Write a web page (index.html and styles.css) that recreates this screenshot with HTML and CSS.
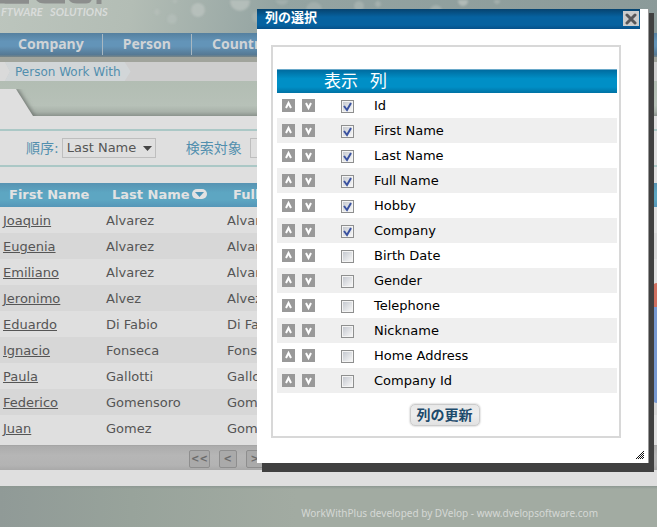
FILE: index.html
```html
<!DOCTYPE html>
<html lang="ja">
<head>
<meta charset="utf-8">
<title>Person Work With</title>
<link rel="stylesheet" href="styles.css">
</head>
<body>
<div class="page">
<header class="banner">
  <svg class="bubbles" width="657" height="33" viewBox="0 0 657 33" aria-hidden="true">
    <g fill="#bcc4c0" opacity=".75"><circle cx="198" cy="10" r="7"/><circle cx="240" cy="1" r="10"/><circle cx="172" cy="19" r="5" opacity=".6"/><circle cx="157" cy="12" r="3" opacity=".6"/><circle cx="175" cy="0" r="3" opacity=".6"/><circle cx="258" cy="17" r="6" opacity=".5"/><circle cx="282" cy="-2" r="7" opacity=".5"/><circle cx="314" cy="10" r="8" opacity=".5"/><circle cx="359" cy="6" r="5" opacity=".6"/><circle cx="378" cy="4" r="3" opacity=".6"/><circle cx="436" cy="11" r="6" opacity=".6"/><circle cx="463" cy="1" r="5"/><circle cx="497" cy="1" r="3" opacity=".6"/></g>
  </svg>
  <svg class="logo" width="110" height="14" viewBox="0 0 110 14" aria-label="DVelop">
    <g fill="none" stroke="#8c8e8d" stroke-width="5"><path d="M-2 1H29"/><path d="M0 -6Q1 1 8 1H29"/><path d="M37 -6Q37 1 45 1H65"/><path d="M70 -6Q70 1 77 1H86Q90 1 90 -5"/><path d="M99 -4V4"/></g>
  </svg>
  <span class="tagline">FTWARE &nbsp; SOLUTIONS</span>
</header>
<nav class="nav"><a href="#">Company</a><a href="#">Person</a><a href="#">Country</a></nav>
<div class="crumbs"><span class="home"></span><a href="#">Person Work With</a></div>
<div class="tabs"><svg width="44" height="27" viewBox="0 0 44 27" aria-hidden="true"><defs><filter id="soft" x="-20%" y="-30%" width="150%" height="160%"><feGaussianBlur stdDeviation="2"/></filter></defs><path d="M-9 0H18L36 29H-9Z" fill="#6f7671" filter="url(#soft)"/><path d="M-2 0H16L33 27H-2Z" fill="#dfdfdf"/></svg></div>
<main class="panel">
  <form class="filters">
    <label for="order">順序:</label>
    <span class="pick"><select id="order"><option>Last Name</option></select><svg width="9" height="5" viewBox="0 0 9 5" aria-hidden="true"><path d="M0 0H9L4.500 5Z" fill="#444"/></svg></span>
    <label for="target">検索対象</label>
    <input id="target" type="text">
  </form>
  <table class="people">
    <thead><tr><th>First Name</th><th>Last Name<svg width="15" height="10" viewBox="0 0 15 10" aria-hidden="true"><rect width="15" height="10" rx="5" fill="#e2e2e2"/><path d="M3 3H12L7.500 8Z" fill="#4f96b8"/></svg></th><th>Full Name</th></tr></thead>
    <tbody>
      <tr><td><a href="#">Joaquin</a></td><td>Alvarez</td><td>Alvarez Joaquin</td></tr>
      <tr><td><a href="#">Eugenia</a></td><td>Alvarez</td><td>Alvarez Eugenia</td></tr>
      <tr><td><a href="#">Emiliano</a></td><td>Alvarez</td><td>Alvarez Emiliano</td></tr>
      <tr><td><a href="#">Jeronimo</a></td><td>Alvez</td><td>Alvez Jeronimo</td></tr>
      <tr><td><a href="#">Eduardo</a></td><td>Di Fabio</td><td>Di Fabio Eduardo</td></tr>
      <tr><td><a href="#">Ignacio</a></td><td>Fonseca</td><td>Fonseca Ignacio</td></tr>
      <tr><td><a href="#">Paula</a></td><td>Gallotti</td><td>Gallotti Paula</td></tr>
      <tr><td><a href="#">Federico</a></td><td>Gomensoro</td><td>Gomensoro Federico</td></tr>
      <tr><td><a href="#">Juan</a></td><td>Gomez</td><td>Gomez Juan</td></tr>
    </tbody>
  </table>
  <div class="pager"><button type="button">&lt;&lt;</button><button type="button">&lt;</button><button type="button">&gt;</button></div>
  <div class="chat" aria-hidden="true"></div>
</main>
<footer class="footer">WorkWithPlus developed by DVelop - www.dvelopsoftware.com</footer>
</div>

<section class="dialog" role="dialog" aria-labelledby="dialog-title">
  <header class="titlebar"><h1 id="dialog-title">列の選択</h1>
    <button class="close" type="button" aria-label="閉じる"><svg width="12" height="12" viewBox="0 0 12 12"><path d="M2 2L10 10M10 2L2 10" stroke="#57575a" stroke-width="3" stroke-linecap="round"/></svg></button>
  </header>
  <form class="chooser">
    <table class="columns">
      <thead><tr><th></th><th>表示</th><th>列</th></tr></thead>
      <tbody id="rows"></tbody>
    </table>
    <button class="update" type="button">列の更新</button>
  </form>
  <svg class="grip" width="8" height="8" viewBox="0 0 8 8" shape-rendering="crispEdges" aria-hidden="true"><path d="M7 0h1v1h-1zM6 1h1v1h-1zM5 2h1v1h-1zM7 2h1v1h-1zM4 3h1v1h-1zM6 3h1v1h-1zM3 4h1v1h-1zM5 4h1v1h-1zM7 4h1v1h-1zM2 5h1v1h-1zM4 5h1v1h-1zM6 5h1v1h-1zM1 6h1v1h-1zM3 6h1v1h-1zM5 6h1v1h-1zM7 6h1v1h-1zM0 7h1v1h-1zM2 7h1v1h-1zM4 7h1v1h-1zM6 7h1v1h-1z" fill="#111"/></svg>
</section>
<script src="script.js"></script>
</body>
</html>
```
FILE: styles.css
```css
* { box-sizing: border-box; }
body {
  margin: 0;
  background: #dfdfdf;
  color: #555;
  font: 13px/16px "DejaVu Sans", "Noto Sans CJK JP", sans-serif;
}
button, select, input { font: inherit; }
.page { min-height: 100vh; overflow: hidden; display: flex; flex-direction: column; }

.banner {
  position: relative;
  height: 33px;
  overflow: hidden;
  background: linear-gradient(100deg, #bcc5bd 0%, #b3bdb5 20%, #94a4a2 42%, #8b9a99 100%);
}
.bubbles, .logo { position: absolute; left: 0; top: 0; }
.bubbles { filter: blur(1px); }
.tagline {
  display: block;
  padding: 5px 0 0 1px;
  position: relative;
  font: italic 700 11px/14px Lato, sans-serif;
  color: #d9dcda;
}
.nav {
  display: flex;
  height: 24px;
  padding: 1px 0 2px;
  background: linear-gradient(#55809f, #6394b8 35%, #6394b8 55%, #567994 90%, #7a8688);
}
.nav a {
  padding: 0 20px;
  border-right: 1px solid #a8b8c2;
  color: #d0d3d6;
  font: 700 14px/20px "Noto Sans", sans-serif;
  text-decoration: none;
}
.nav a:first-child { padding: 0 18px; }
.crumbs {
  display: flex;
  height: 24px;
  border-top: 5px solid #a1a49c;
  background: #cecece;
}
.home {
  width: 10px;
  background: #dadada;
  clip-path: polygon(0 0, 5px 0, 100% 50%, 5px 100%, 0 100%);
}
.crumbs a {
  margin-left: -5px;
  padding: 0 10px;
  background: #d2d6d8;
  clip-path: polygon(0 0, calc(100% - 6px) 0, 100% 50%, calc(100% - 6px) 100%, 0 100%, 5px 50%);
  color: #528fae;
  font-size: 12px;
  line-height: 20px;
  text-decoration: none;
}
.tabs {
  display: flex;
  align-items: flex-end;
  height: 35px;
  background: linear-gradient(#b2bdb3, #b7c1b8 70%, #a8b1a9 88%, #8b938d);
}

.panel { position: relative; height: 370px; flex: none; padding-top: 13px; }
.filters {
  display: flex;
  align-items: center;
  height: 38px;
  margin-bottom: 16px;
  padding-left: 26px;
  border: solid #abc8c6;
  border-width: 2px 0;
}
.filters label { color: #528fae; font-size: 14px; }
.pick { display: grid; align-items: center; width: 94px; margin: 0 30px 0 3px; }
.pick > * { grid-area: 1 / 1; }
.pick svg { justify-self: end; margin-right: 4px; pointer-events: none; }
.filters select {
  appearance: none;
  height: 20px;
  padding: 0 4px;
  border: 1px solid #bebebe;
  border-radius: 0;
  background: none;
  color: #555;
}
.filters input { width: 120px; height: 20px; margin-left: 8px; border: 1px solid #bebebe; background: none; }

.people { width: 657px; min-width: 100%; table-layout: fixed; border-collapse: collapse; }
.people th {
  height: 24px;
  padding: 0 9px;
  background: linear-gradient(#5793b2, #5da6c2 40%, #5da6c2 70%, #5596b8);
  color: #e2e2e2;
  text-align: left;
  white-space: nowrap;
}
.people th:first-child { width: 103px; }
.people th:nth-child(2) { width: 121px; }
.people th svg { margin-left: 2px; }
.people td { height: 26px; padding: 2px 3px 0; white-space: nowrap; }
.people tr:nth-child(even) td { background: #d7d7d7; }
.people a { color: #555; }
.pager {
  display: flex;
  gap: 9px;
  height: 25px;
  margin-top: 4px;
  padding: 4px 0 0 189px;
  border-top: 1px solid #a5a5a5;
  background: linear-gradient(#acacac, #b6b6b6 40%, #b3b3b3 80%, #a9a9a9);
}
.pager button {
  height: 18px;
  min-width: 18px;
  padding: 0 1px;
  border: 1px solid #8e8e8e;
  border-radius: 2px;
  background: #aaa;
  color: #6c6c6c;
  font-size: 10px;
  font-weight: 700;
  line-height: 14px;
}
.chat {
  position: absolute;
  right: 0;
  top: 167px;
  width: 4px;
  height: 120px;
  border-radius: 4px 0 0 4px;
  background: linear-gradient(#cf7060 24px, #7799d2 24px);
}
.footer {
  flex: 1;
  padding: 20px 59px 0 0;
  background: linear-gradient(#8d9892, transparent 3px), linear-gradient(90deg, #909a97, #98a39b 20%, #a2aba2 45%, #a2aba2);
  color: #d5d8d5;
  font: 10px/15px "Noto Sans", sans-serif;
  text-align: right;
}

.dialog {
  position: absolute;
  left: 257px;
  right: 8px;
  top: 9px;
  padding: 0 8px 25px 0;
  border-right: 1px solid #999;
  background: #fff;
  box-shadow: 5px 9px 0 #404040, 5px 4px 0 #404040;
  color: #000;
}
.titlebar {
  display: flex;
  justify-content: space-between;
  height: 20px;
  padding: 0 1px 0 8px;
  background: linear-gradient(#06436f, #0662a0 40%, #0662a0 80%, #06508a);
}
.titlebar h1 { margin: 0; color: #fff; font: 700 13px/16px "Noto Sans CJK JP", sans-serif; }
.close { display: grid; place-items: center; width: 16px; height: 15px; margin-top: 2px; padding: 0; border: 0; background: #ccc; }
.chooser {
  display: flex;
  flex-direction: column;
  align-items: center;
  margin: 16px 19px 0 14px;
  padding: 22px 2px 10px 4px;
  border: 2px solid #d8d8d8;
}
.columns { width: 100%; border-spacing: 0; }
.columns th {
  height: 24px;
  padding: 0 0 2px;
  background: linear-gradient(#6aa9ca 1px, #006ca0 1px, #008fc6 40%, #008fc6 75%, #0072a4);
  color: #fff;
  font: 17px/20px "Noto Sans CJK JP", sans-serif;
  text-align: left;
}
.columns th:first-child { width: 47px; }
.columns th:nth-child(2) { width: 46px; }
.columns td { height: 25px; padding: 0 4px; }
.columns td:nth-child(2) { padding-left: 17px; }
.columns tr:nth-child(even) td { background: #efefef; }
.moves { display: flex; gap: 7px; padding-left: 1px; }
.moves button { display: grid; width: 13px; height: 13px; padding: 0; border: 0; background: #999; }
.columns input {
  appearance: none;
  display: block;
  width: 13px;
  height: 13px;
  margin: 0;
  border: 1px solid #8e8f8f;
  background: linear-gradient(135deg, #c5c9d0, #f6f6f6) center / 9px 9px no-repeat #f4f4f4;
}
.check { display: grid; padding-top: 2px; }
.check > * { grid-area: 1 / 1; }
.check svg { pointer-events: none; visibility: hidden; }
.check input:checked + svg { visibility: visible; }
.update {
  height: 22px;
  margin: 11px 5px 0 0;
  padding: 0 6px 2px;
  border: 1px solid #ccc;
  border-radius: 5px;
  background: linear-gradient(#e8e8e8, #eee 50%, #e1e1e1);
  box-shadow: 0 0 2px #aaa;
  color: #1d4b6c;
  font: 700 14px/16px "Noto Sans CJK JP", sans-serif;
}
.grip { position: absolute; right: 4px; bottom: 4px; }
```
FILE: script.js
```js
const columns = ["Id", "First Name", "Last Name", "Full Name", "Hobby", "Company",
  "Birth Date", "Gender", "Telephone", "Nickname", "Home Address", "Company Id"];
const arrow = d => `<svg width="13" height="13" viewBox="0 0 13 13"><path d="${d}" fill="none" stroke="#fff" stroke-width="2"/></svg>`;
document.getElementById("rows").innerHTML = columns.map((name, i) => `<tr>
  <td><div class="moves"><button type="button" aria-label="Up">${arrow("M4 9L6.500 4L9 9")}</button><button type="button" aria-label="Down">${arrow("M4 4L6.500 9L9 4")}</button></div></td>
  <td><div class="check"><input type="checkbox" id="c${i}" ${i < 6 ? "checked" : ""}><svg width="13" height="13" viewBox="0 0 13 13"><path d="M3 6L6 10L10 3" fill="none" stroke="#3a52a0" stroke-width="2"/></svg></div></td>
  <td><label for="c${i}">${name}</label></td></tr>`).join("");
```
